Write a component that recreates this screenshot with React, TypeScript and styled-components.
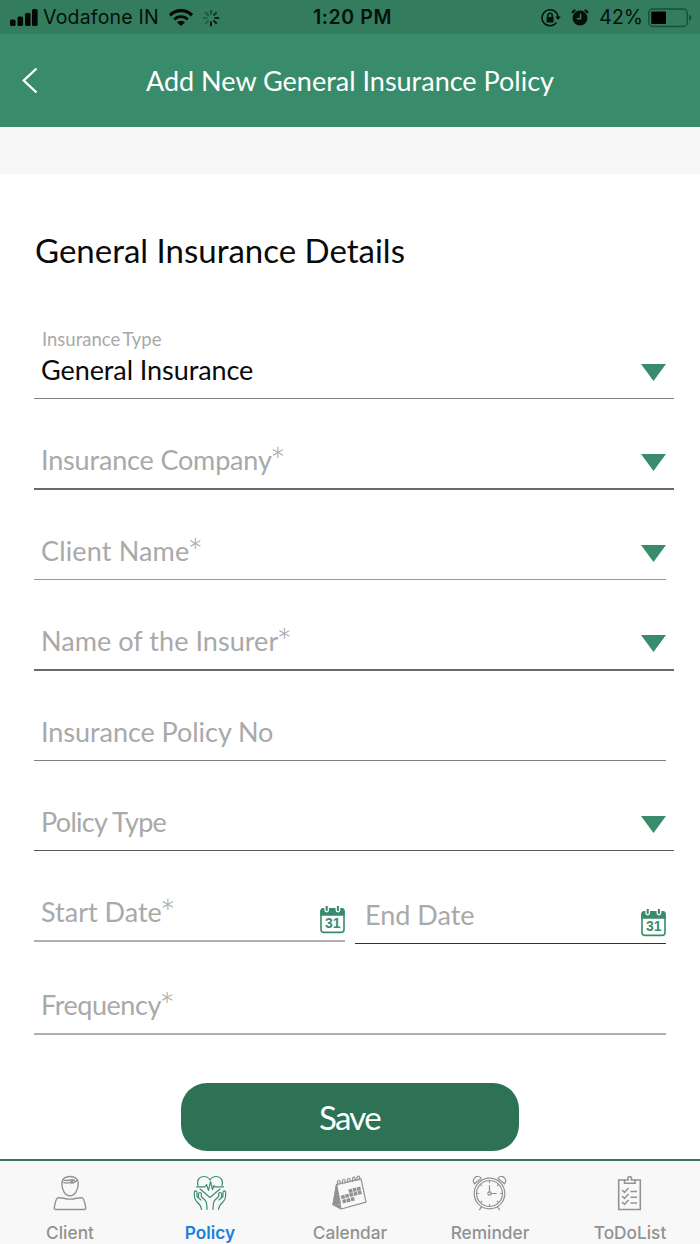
import React from "react";
import styled, { createGlobalStyle } from "styled-components";

const GlobalStyle = createGlobalStyle`
  * { box-sizing: border-box; }
  body { margin: 0; background: #fff; }
`;

const humanist = `"Gill Sans", Lato, "Open Sans", sans-serif`;
const system = `Inter, Roboto, sans-serif`;

const Screen = styled.div`
  width: 700px;
  height: 1244px;
  display: flex;
  flex-direction: column;
  background: #fff;
  font-family: ${humanist};
  overflow: hidden;
`;

const StatusBar = styled.div`
  height: 34px;
  flex: none;
  display: grid;
  grid-template-columns: 1fr auto 1fr;
  align-items: center;
  padding: 2px 8px 0 10px;
  background: #347c5e;
  color: #04100b;
  font-family: ${system};
`;

const StatusGroup = styled.div<{ $end?: boolean }>`
  display: flex;
  align-items: center;
  justify-content: ${(p) => (p.$end ? "flex-end" : "flex-start")};
`;

const StatusText = styled.span<{ $track?: number; $weight?: number }>`
  font-size: 19.5px;
  letter-spacing: ${(p) => p.$track ?? 0}px;
  font-weight: ${(p) => p.$weight ?? 400};
  line-height: 1.2;
  white-space: nowrap;
`;

const Clock = styled(StatusText)`
  margin-left: 3px;
`;

const Gap = styled.span<{ $w: number }>`
  flex: none;
  width: ${(p) => p.$w}px;
`;

const NavBar = styled.header`
  height: 93px;
  flex: none;
  display: grid;
  grid-template-columns: 60px 1fr 60px;
  align-items: center;
  background: #388c6b;
  color: #fff;
`;

const BackButton = styled.button`
  border: 0;
  background: none;
  padding: 0 0 0 21px;
  display: flex;
`;

const NavTitle = styled.h1`
  margin: 0;
  text-align: center;
  font-size: 27px;
  font-weight: 400;
  line-height: 32px;
  white-space: nowrap;
`;

const Band = styled.div`
  height: 47px;
  flex: none;
  background: #f7f7f7;
`;

const Form = styled.main`
  flex: none;
  height: 985px;
  padding: 0 26px 0 34px;
  display: flex;
  flex-direction: column;
`;

const Heading = styled.h2`
  margin: 0;
  height: 134px;
  flex: none;
  padding: 56px 0 0 1px;
  font-size: 33px;
  font-weight: 400;
  line-height: 40px;
  color: #0a0a0a;
  white-space: nowrap;
`;

const Field = styled.div<{ $height: number; $inset?: boolean; $line: string; $thick?: boolean }>`
  height: ${(p) => p.$height}px;
  flex: none;
  margin-right: ${(p) => (p.$inset ? 8 : 0)}px;
  padding: 0 ${(p) => (p.$inset ? 0 : 8)}px 12px 7px;
  border-bottom: ${(p) => (p.$thick ? 2 : 1)}px solid ${(p) => p.$line};
  display: flex;
  align-items: flex-end;
  justify-content: space-between;
`;

const Stack = styled.div`
  display: flex;
  flex-direction: column;
`;

const Caption = styled.span`
  margin: 0 0 4px 1px;
  font-size: 18.5px;
  line-height: 22px;
  word-spacing: -2px;
  color: #a9a9a9;
  white-space: nowrap;
`;

const Value = styled.span<{ $filled?: boolean; $track?: number }>`
  font-size: 27px;
  line-height: 32px;
  letter-spacing: ${(p) => p.$track ?? 0}px;
  color: ${(p) => (p.$filled ? "#0a0a0a" : "#a9a9a9")};
  white-space: nowrap;
`;

const Star = styled.span`
  font-size: 38px;
  font-weight: 300;
  line-height: 0;
  vertical-align: -5px;
  letter-spacing: 0;
  margin-left: -2px;
`;

const Arrow = styled.span`
  width: 25px;
  height: 17px;
  margin-bottom: 5px;
  background: #388c6b;
  clip-path: polygon(0 0, 100% 0, 50% 100%);
`;

const DateRow = styled.div`
  display: grid;
  grid-template-columns: 311px 311px;
  flex: none;
  gap: 10px;
  align-items: start;
  height: 93px;
  margin-right: 8px;
`;

const DateField = styled.div<{ $height: number; $line: string; $thick?: boolean; $indent: number }>`
  height: ${(p) => p.$height}px;
  padding: 0 0 12px ${(p) => p.$indent}px;
  border-bottom: ${(p) => (p.$thick ? 2 : 1)}px solid ${(p) => p.$line};
  display: flex;
  align-items: flex-end;
  justify-content: space-between;
`;

const DateGlyph = styled.svg`
  display: block;
  margin-bottom: -6px;
`;

const SaveButton = styled.button`
  align-self: center;
  flex: none;
  margin: 48px 0 0 -8px;
  width: 338px;
  height: 68px;
  border: 0;
  border-radius: 26px;
  background: #2d7255;
  color: #fff;
  font-family: inherit;
  font-size: 33px;
  line-height: 40px;
  letter-spacing: -1.7px;
  padding: 0 1px 0 0;
`;

const TabBar = styled.nav`
  flex: none;
  height: 85px;
  border-top: 2px solid #3d7263;
  background: #f8f8f8;
  display: grid;
  grid-template-columns: repeat(5, 1fr);
`;

const Tab = styled.a<{ $active?: boolean }>`
  display: flex;
  flex-direction: column;
  align-items: center;
  padding-top: 14px;
  color: ${(p) => (p.$active ? "#1b7fdc" : "#929292")};
  font-family: ${system};
  font-weight: ${(p) => (p.$active ? 600 : 500)};
`;

const TabLabel = styled.span`
  margin-top: 11px;
  font-size: 17.3px;
  line-height: 22px;
`;

const CalendarIcon = () => (
  <DateGlyph width="25" height="28" viewBox="0 0 25 28">
    <rect x="1" y="3" width="23" height="23.400" rx="3" fill="#fff" stroke="#388c6b" strokeWidth="1.600" />
    <path d="M.3 9.800V5q0-3 3-3h18.400q3 0 3 3v4.800z" fill="#388c6b" />
    <path d="M5 0v4q0 1.800 1.700 1.800T8.400 4V0M16.200 0v4q0 1.800 1.700 1.800T19.600 4V0" fill="#388c6b" stroke="#fff" strokeWidth="1.300" />
    <text x="12.800" y="22.200" textAnchor="middle" fontFamily="Liberation Sans, sans-serif" fontWeight="700" fontSize="14" fill="#388c6b">31</text>
  </DateGlyph>
);

const SignalIcon = () => (
  <svg width="28" height="17" viewBox="0 0 28 17" fill="#030806">
    <rect x="0" y="10.500" width="5.600" height="6.500" rx="1.500" />
    <rect x="7.500" y="7.500" width="5.600" height="9.500" rx="1.500" />
    <rect x="15" y="4" width="5.600" height="13" rx="1.500" />
    <rect x="22" y="0" width="5.600" height="17" rx="1.500" />
  </svg>
);

const WifiIcon = () => (
  <svg width="24" height="17" viewBox="0 0 24 17" fill="none" stroke="#030806">
    <path d="M1 6.300a15.500 15.500 0 0 1 22 0" strokeWidth="3.200" />
    <path d="M5.300 10.400a9.600 9.600 0 0 1 13.400 0" strokeWidth="2.800" />
    <path d="M8 13.300a5.700 5.700 0 0 1 8 0L12 17z" fill="#030806" stroke="none" />
  </svg>
);

const spokeOpacity = [0.5, 0.65, 0.85, 0.9, 1, 0.3, 0.3, 0.4];

const SpinnerIcon = () => (
  <svg width="18" height="18" viewBox="-9 -9 18 18" stroke="#06140e" strokeWidth="1.900" strokeLinecap="round">
    {spokeOpacity.map((o, i) => (
      <path key={i} d="M0-4.200V-7.400" opacity={o} transform={`rotate(${i * 45})`} />
    ))}
  </svg>
);

const LockIcon = () => (
  <svg width="20" height="18" viewBox="0 0 20 18" fill="none" stroke="#06100c" strokeWidth="1.500">
    <path d="M15.600 13.400A8 8 0 1 1 17 8" />
    <path d="M14.200 7.500h5.600L17 11z" fill="#06100c" stroke="none" />
    <rect x="5.600" y="8" width="7" height="5.500" rx=".6" fill="#06100c" stroke="none" />
    <path d="M7 8V6.300a2.100 2.100 0 0 1 4.200 0V8" />
  </svg>
);

const StatusAlarmIcon = () => (
  <svg width="18" height="17" viewBox="0 0 18 17">
    <circle cx="9" cy="9" r="7.500" fill="#06100c" />
    <path d="M1.200 4.300A4 4 0 0 1 4.500 1.200M13.500 1.200A4 4 0 0 1 16.800 4.300" fill="none" stroke="#06100c" strokeWidth="1.900" />
    <path d="M9.500 4.800v5H5.800" fill="none" stroke="#347c5e" strokeWidth="1.500" />
  </svg>
);

const BatteryIcon = () => (
  <svg width="44" height="20" viewBox="0 0 44 20">
    <rect x=".8" y="1" width="38.500" height="17.500" rx="4" fill="none" stroke="#1a4e39" strokeWidth="1.400" />
    <rect x="3.300" y="3.500" width="14.700" height="12.500" rx="1" fill="#000" />
    <path d="M41 6.500q2.500 1 2.500 3.300T41 13z" fill="#1a4e39" />
  </svg>
);

const ClientIcon = () => (
  <svg width="36" height="36" viewBox="0 0 36 36" fill="none" stroke="#929292" strokeWidth="1.400" strokeLinejoin="round">
    <path d="M9.800 8.500C9.600 4 13 1.500 18 1.500S26.600 4 26.300 8.500C26 15 23 20.800 18 20.800S10 15 9.800 8.500z" />
    <path d="M10.500 7C14 8.800 18 8 20.500 6L19 8C22 7.800 24.500 6.500 25 4.500M11.300 4.800C14 6 17 5.500 20 4.800L23 5.200" />
    <path d="M5.500 23C7 22.500 9 22.700 11.500 23.300C16 24.500 20 24.500 24.500 23.300C27 22.700 29 22.500 30.500 23C32.500 24.500 33 29 33.700 32.500Q34 34.500 32 34.500H4Q2 34.500 2.300 32.500C3 29 3.500 24.500 5.500 23z" />
  </svg>
);

const PolicyIcon = () => (
  <svg width="36" height="36" viewBox="0 0 36 36" fill="none" stroke="#388c6b" strokeWidth="1.150" strokeLinejoin="round" strokeLinecap="round">
    <path d="M6 10.500C4.500 5 7.500 1.500 11.500 1.500C15 1.500 17 3 18 5C19 3 21 1.500 24.500 1.500C28.500 1.500 31.500 5 30 10.500" />
    <path d="M8 14L18 22.500L28 14" />
    <path d="M4.500 11.800H13L14.500 9.500L16.500 15.500L18.500 6.500L20.500 14.500L22 10.500L23 11.800H31.500" />
    <path d="M9.500 34.500C9 31 8 29.500 5.500 27.500C2.500 25 2.300 23 2.300 19V17Q3.500 14.800 5 17V21.500L9 25M6.500 22V18.500Q8 16.500 9.300 18.500V21.500L13 25C15 27 15 30 15 34.500" />
    <path d="M26.500 34.500C27 31 28 29.500 30.500 27.500C33.500 25 33.700 23 33.700 19V17Q32.500 14.800 31 17V21.500L27 25M29.500 22V18.500Q28 16.500 26.700 18.500V21.500L23 25C21 27 21 30 21 34.500" />
  </svg>
);

const dayCells = [
  [18.5, 15.9], [22.6, 14.8], [26.8, 13.7],
  [11, 22], [15.1, 20.9], [19.3, 19.8], [23.5, 18.7], [27.7, 17.6],
  [12.3, 26.3], [16.5, 25.2], [20.7, 24.1],
];

const TabCalendarIcon = () => (
  <svg width="36" height="36" viewBox="0 0 36 36" fill="none" stroke="#929292" strokeWidth="1.200" strokeLinejoin="round">
    <path d="M4.500 9.500L29 3.800L34 27.200L9.200 34L1 29.800z" />
    <path d="M4.500 9.500L1 29.500L8.500 28.800z" fill="#929292" />
    <path d="M2 29.800L9.200 34L8.600 30z" fill="#929292" strokeWidth=".6" />
    <path d="M5.500 10.500V6.500Q7 4 8.200 6.500L7.700 9.500M10.500 9.200V5.500Q12 3 13.200 5.500L12.700 8.500M15.500 8V4.500Q17 2 18.200 4.500L17.700 7.300M20.500 7V3.300Q22 1 23.200 3.300L22.700 6.200M25 6V2.300Q26.500 0 27.700 2.300L27.200 5.200" />
    <g fill="#929292" stroke="none">
      {dayCells.map(([x, y]) => (
        <rect key={`${x}-${y}`} x={x - 1.8} y={y - 1.8} width="3.600" height="3.600" transform={`rotate(-14 ${x} ${y})`} />
      ))}
    </g>
  </svg>
);

const ReminderIcon = () => (
  <svg width="36" height="36" viewBox="0 0 36 36" fill="none" stroke="#929292" strokeWidth="1.200" strokeLinecap="round">
    <circle cx="17.500" cy="18.500" r="15.300" />
    <circle cx="17.500" cy="18.500" r="13" />
    <circle cx="17.500" cy="18.500" r="1.700" />
    <path d="M17.500 16.800V10.500M19.200 18.500H24" />
    <path d="M17.500 6.500v1M17.500 29.500v1M5.500 18.500h1M28.500 18.500h1M9 10l.7.7M25.300 26.300l.7.700M9 27l.7-.7M25.300 10.700l.7-.7" />
    <path d="M2.500 8.800C-.5 5 3 1 6.500 1.500Q9 2 9 3.500zM32.500 8.800C35.500 5 32 1 28.500 1.500Q26 2 26 3.500z" />
    <path d="M9.500 31.800L7.500 34.800M25.500 31.800L27.500 34.800" />
  </svg>
);

const TodoIcon = () => (
  <svg width="36" height="36" viewBox="0 0 36 36" fill="none" stroke="#929292" strokeWidth="1.600">
    <path d="M13 5H6.700V34.500H28.300V5H23" />
    <path d="M12.500 8.300V5H16V3.500Q16 1.500 17.700 1.500T19.500 3.500V5H23V8.300z" />
    <path d="M10 15l2.500 2.500l4-4.500M10 21l2.500 2.500l4-4.500M10 27l2.500 2.500l4-4.500M18.500 16.500h6.500M18.500 22.200h6.500M18.500 28h6.500" strokeWidth="1.500" />
  </svg>
);

export default function App() {
  return (
    <>
      <GlobalStyle />
      <Screen>
        <StatusBar>
          <StatusGroup>
            <SignalIcon />
            <Gap $w={5} />
            <StatusText $track={0.2}>Vodafone IN</StatusText>
            <Gap $w={10} />
            <WifiIcon />
            <Gap $w={9} />
            <SpinnerIcon />
          </StatusGroup>
          <Clock $weight={600} $track={0.6}>1:20 PM</Clock>
          <StatusGroup $end>
            <LockIcon />
            <Gap $w={10} />
            <StatusAlarmIcon />
            <Gap $w={10} />
            <StatusText>42%</StatusText>
            <Gap $w={5} />
            <BatteryIcon />
          </StatusGroup>
        </StatusBar>
        <NavBar>
          <BackButton aria-label="Back">
            <svg width="17" height="27" viewBox="0 0 17 27" fill="none" stroke="#fff" strokeWidth="2.400">
              <path d="M15.500 1.500L2.800 13.500L15.500 25.500" />
            </svg>
          </BackButton>
          <NavTitle>Add New General Insurance Policy</NavTitle>
        </NavBar>
        <Band />
        <Form>
          <Heading>General Insurance Details</Heading>
          <Field $height={91} $line="#808080">
            <Stack>
              <Caption>Insurance Type</Caption>
              <Value $filled $track={-0.08}>General Insurance</Value>
            </Stack>
            <Arrow />
          </Field>
          <Field $height={91} $line="#6a6a6a" $thick>
            <Value $track={-0.17}>Insurance Company<Star>*</Star></Value>
            <Arrow />
          </Field>
          <Field $height={90} $inset $line="#999">
            <Value $track={0.15}>Client Name<Star>*</Star></Value>
            <Arrow />
          </Field>
          <Field $height={91} $line="#6a6a6a" $thick>
            <Value $track={0.05}>Name of the Insurer<Star>*</Star></Value>
            <Arrow />
          </Field>
          <Field $height={90} $inset $line="#808080">
            <Value $track={-0.05}>Insurance Policy No</Value>
          </Field>
          <Field $height={90} $line="#555">
            <Value $track={-0.7}>Policy Type</Value>
            <Arrow />
          </Field>
          <DateRow>
            <DateField $height={91} $indent={7} $line="#b0b0b0" $thick>
              <Value>Start Date<Star>*</Star></Value>
              <CalendarIcon />
            </DateField>
            <DateField $height={93} $indent={10} $line="#333">
              <Value>End Date</Value>
              <CalendarIcon />
            </DateField>
          </DateRow>
          <Field $height={91} $inset $line="#b0b0b0" $thick>
            <Value $track={-0.45}>Frequency<Star>*</Star></Value>
          </Field>
          <SaveButton>Save</SaveButton>
        </Form>
        <TabBar>
          <Tab><ClientIcon /><TabLabel>Client</TabLabel></Tab>
          <Tab $active><PolicyIcon /><TabLabel>Policy</TabLabel></Tab>
          <Tab><TabCalendarIcon /><TabLabel>Calendar</TabLabel></Tab>
          <Tab><ReminderIcon /><TabLabel>Reminder</TabLabel></Tab>
          <Tab><TodoIcon /><TabLabel>ToDoList</TabLabel></Tab>
        </TabBar>
      </Screen>
    </>
  );
}
